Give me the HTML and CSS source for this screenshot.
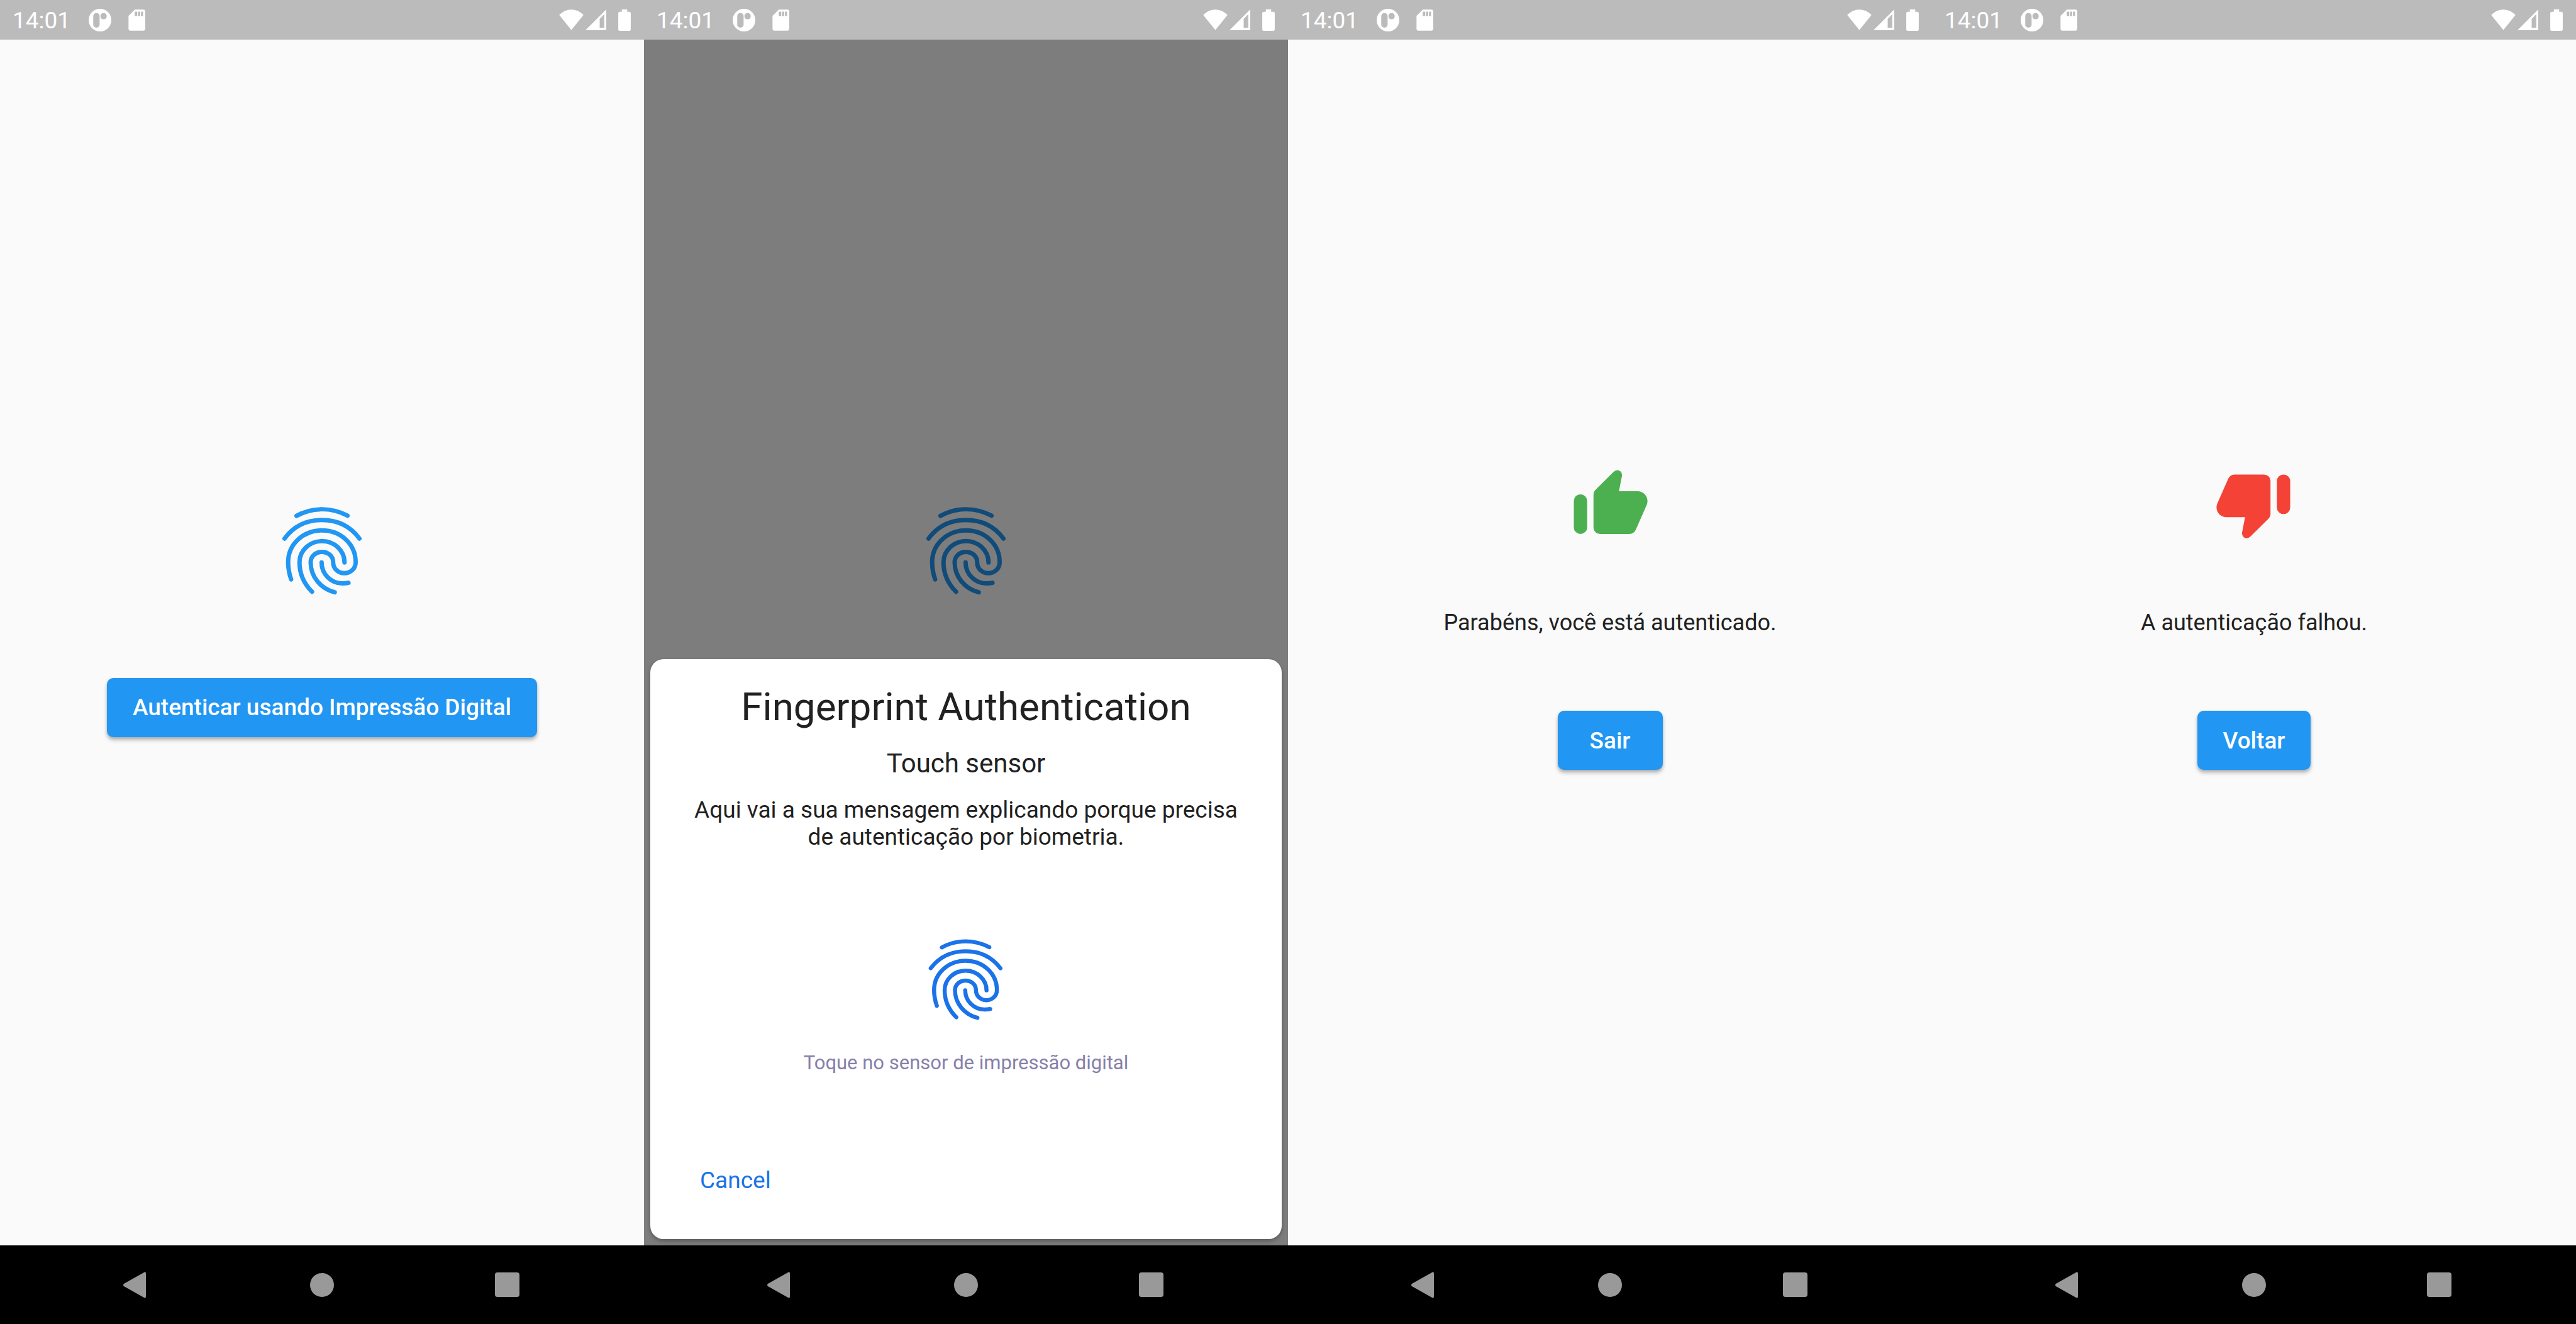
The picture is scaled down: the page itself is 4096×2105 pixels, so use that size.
FILE: index.html
```html
<!DOCTYPE html>
<html lang="pt-BR">
<head>
<meta charset="utf-8">
<title>Autenticação biométrica</title>
<link rel="stylesheet" href="styles.css">
</head>
<body>
<svg class="sprite" aria-hidden="true">
  <symbol id="app" viewBox="448 42 114 114"><circle cx="505" cy="99" r="57" fill="#fff"/><rect x="471" y="63" width="32" height="74" rx="16" fill="#bbb"/><circle cx="523" cy="79" r="16" fill="#bbb"/></symbol>
  <symbol id="sd" viewBox="646 47 84 106"><path fill="#fff" d="M678 48H720Q730 48 730 58V142Q730 152 720 152H657Q647 152 647 142V79Z"/><path fill="#bbb" d="M678 58h12v22h-12zM694 58h11v22h-11zM709 58h10v22h-10z"/></symbol>
  <symbol id="wifi" viewBox="114 44 123 105"><path fill="#fff" d="M114 72Q142 45 175.500 45T237 72L175.500 148Z"/></symbol>
  <symbol id="signal" viewBox="247 46 104 104"><path fill="#fff" fill-rule="evenodd" d="M247 150L351 46V150ZM318 93V138H341V70Z"/></symbol>
  <symbol id="battery" viewBox="411 45 63 108"><path fill="#fff" d="M429 45h27v12h11q7 0 7 7v82q0 7-7 7h-49q-7 0-7-7V64q0-7 7-7h11z"/></symbol>
  <symbol id="finger" viewBox="0 0 600 600"><g fill="none" stroke="currentColor" stroke-width="22" stroke-linecap="round"><path d="M172 133C252 89 348 89 428 132"/><path d="M112 247C160 182 228 154 300 154S440 182 488 247"/><path d="M145 452C135 423 130 402 130 366C130 275 206 206 300 206S469 275 469 366C469 397 444 421 412 421S356 397 356 366S330 314 299 314S243 337 243 366C243 440 295 500 364 517"/><path d="M413 367C413 307 362 260 300 260S187 307 187 366C187 425 209 473 250 514"/><path d="M298 367C298 425 345 472 402 472Q420 472 433 469"/></g></symbol>
  <symbol id="thumb" viewBox="0 -15 600 465"><rect x="118" y="178" width="67" height="199" rx="33" fill="currentColor"/><path fill="currentColor" d="M217 345V180Q217 165 228 154L318 65Q335 49 352 62Q362 71 360 86L345 162H438C474 162 498 196 485 230L430 355Q420 377 398 377H250A33 32 0 0 1 217 345Z"/></symbol>
  <symbol id="back" viewBox="0 0 41 42"><path fill="#999" d="M33 1Q36 -1 36 3V39Q36 43 33 41L1 23Q-1 21 1 19Z"/></symbol>
</svg>
<div class="screens">

  <section class="screen">
    <header class="status">
      <span class="time">14:01</span>
      <svg class="ic-app"><use href="#app"/></svg>
      <svg class="ic-sd"><use href="#sd"/></svg>
      <svg class="ic-wifi"><use href="#wifi"/></svg>
      <svg class="ic-signal"><use href="#signal"/></svg>
      <svg class="ic-battery"><use href="#battery"/></svg>
    </header>
    <main class="content">
      <svg class="finger"><use href="#finger"/></svg>
      <button class="btn" type="button">Autenticar usando Impressão Digital</button>
    </main>
    <nav class="navbar">
      <button class="nav-btn" type="button" aria-label="Voltar"><svg class="back"><use href="#back"/></svg></button>
      <button class="nav-btn home" type="button" aria-label="Início"></button>
      <button class="nav-btn recent" type="button" aria-label="Recentes"></button>
    </nav>
  </section>

  <section class="screen">
    <header class="status">
      <span class="time">14:01</span>
      <svg class="ic-app"><use href="#app"/></svg>
      <svg class="ic-sd"><use href="#sd"/></svg>
      <svg class="ic-wifi"><use href="#wifi"/></svg>
      <svg class="ic-signal"><use href="#signal"/></svg>
      <svg class="ic-battery"><use href="#battery"/></svg>
    </header>
    <main class="content">
      <svg class="finger behind"><use href="#finger"/></svg>
      <div class="scrim">
        <div class="dialog" role="dialog" aria-labelledby="dlg-title">
          <h1 class="dlg-title" id="dlg-title">Fingerprint Authentication</h1>
          <h2 class="dlg-sub">Touch sensor</h2>
          <p class="dlg-text">Aqui vai a sua mensagem explicando porque precisa de autenticação por biometria.</p>
          <svg class="dlg-finger" viewBox="0 0 600 570"><g transform="translate(18 -8) scale(.933 .923)"><use href="#finger" width="600" height="600"/></g></svg>
          <p class="dlg-hint">Toque no sensor de impressão digital</p>
          <button class="dlg-cancel" type="button">Cancel</button>
        </div>
      </div>
    </main>
    <nav class="navbar">
      <button class="nav-btn" type="button" aria-label="Voltar"><svg class="back"><use href="#back"/></svg></button>
      <button class="nav-btn home" type="button" aria-label="Início"></button>
      <button class="nav-btn recent" type="button" aria-label="Recentes"></button>
    </nav>
  </section>

  <section class="screen">
    <header class="status">
      <span class="time">14:01</span>
      <svg class="ic-app"><use href="#app"/></svg>
      <svg class="ic-sd"><use href="#sd"/></svg>
      <svg class="ic-wifi"><use href="#wifi"/></svg>
      <svg class="ic-signal"><use href="#signal"/></svg>
      <svg class="ic-battery"><use href="#battery"/></svg>
    </header>
    <main class="content">
      <svg class="thumb ok"><use href="#thumb"/></svg>
      <p class="message">Parabéns, você está autenticado.</p>
      <button class="btn" type="button">Sair</button>
    </main>
    <nav class="navbar">
      <button class="nav-btn" type="button" aria-label="Voltar"><svg class="back"><use href="#back"/></svg></button>
      <button class="nav-btn home" type="button" aria-label="Início"></button>
      <button class="nav-btn recent" type="button" aria-label="Recentes"></button>
    </nav>
  </section>

  <section class="screen">
    <header class="status">
      <span class="time">14:01</span>
      <svg class="ic-app"><use href="#app"/></svg>
      <svg class="ic-sd"><use href="#sd"/></svg>
      <svg class="ic-wifi"><use href="#wifi"/></svg>
      <svg class="ic-signal"><use href="#signal"/></svg>
      <svg class="ic-battery"><use href="#battery"/></svg>
    </header>
    <main class="content">
      <svg class="thumb fail" viewBox="0 -15 600 465"><g transform="rotate(180 300 227.500)"><use href="#thumb" y="-15" width="600" height="465"/></g></svg>
      <p class="message">A autenticação falhou.</p>
      <button class="btn" type="button">Voltar</button>
    </main>
    <nav class="navbar">
      <button class="nav-btn" type="button" aria-label="Voltar"><svg class="back"><use href="#back"/></svg></button>
      <button class="nav-btn home" type="button" aria-label="Início"></button>
      <button class="nav-btn recent" type="button" aria-label="Recentes"></button>
    </nav>
  </section>

</div>
</body>
</html>
```
FILE: styles.css
```css
* {
  box-sizing: border-box;
  margin: 0;
}

body {
  font-family: Roboto, sans-serif;
  font-size: 37px;
  line-height: 43px;
  color: #212121;
  background: #fafafa;
}

button {
  border: 0;
  padding: 0;
  background: none;
  font: inherit;
  cursor: pointer;
}

svg {
  display: block;
  flex: none;
}

.sprite {
  position: absolute;
  width: 0;
  height: 0;
}

.screens {
  display: grid;
  grid-template-columns: repeat(4, 1fr);
  min-height: 100vh;
}

.screen {
  display: flex;
  flex-direction: column;
}

/* Status bar */
.status {
  display: flex;
  align-items: center;
  height: 63px;
  padding: 0 21px 0 20px;
  background: #bbb;
  color: #fff;
}

.time {
  padding-top: 2px;
}

.ic-app {
  width: 36px;
  height: 36px;
  margin-left: 29px;
}

.ic-sd {
  width: 27px;
  height: 34px;
  margin-left: 27px;
}

.ic-wifi {
  width: 39px;
  height: 33px;
  margin-left: auto;
}

.ic-signal {
  width: 33px;
  height: 33px;
  margin-left: 3px;
}

.ic-battery {
  width: 20px;
  height: 34px;
  margin-left: 19px;
}

/* App area */
.content {
  position: relative;
  flex: 1;
  display: flex;
  flex-direction: column;
  align-items: center;
  justify-content: center;
  padding-bottom: 94px;
}

.finger {
  width: 190px;
  height: 190px;
  margin-bottom: 110px;
  color: #2196f3;
}

.finger.behind {
  margin-bottom: 204px;
}

.btn {
  min-width: 167px;
  height: 94px;
  padding: 0 41px;
  border-radius: 10px;
  background: #2196f3;
  color: #fff;
  font-weight: 500;
  box-shadow: 0 5px 6px rgba(0, 0, 0, .22), 0 2px 4px rgba(0, 0, 0, .14);
}

.thumb {
  width: 190px;
  height: 147px;
}

.ok {
  color: #4caf50;
}

.fail {
  color: #f44336;
}

.message {
  margin: 97px 0 118px;
  font-size: 36px;
}

/* Biometric prompt */
.scrim {
  position: absolute;
  inset: 0;
  display: flex;
  align-items: flex-end;
  padding: 10px;
  background: rgba(0, 0, 0, .5);
}

.dialog {
  flex: 1;
  display: flex;
  flex-direction: column;
  align-items: center;
  padding: 39px 70px 72px;
  border-radius: 21px;
  background: #fff;
  text-align: center;
  box-shadow: 0 3px 6px rgba(0, 0, 0, .3);
}

.dlg-title {
  font-size: 62px;
  line-height: 74px;
  font-weight: 400;
}

.dlg-sub {
  margin-top: 28px;
  font-size: 42px;
  line-height: 50px;
  font-weight: 400;
}

.dlg-text {
  margin-top: 27px;
}

.dlg-finger {
  width: 190px;
  height: 180px;
  margin-top: 118px;
  color: #1a73e8;
}

.dlg-hint {
  margin-top: 21px;
  font-size: 31px;
  line-height: 37px;
  color: #8680aa;
}

.dlg-cancel {
  align-self: flex-start;
  margin: 147px 0 0 9px;
  color: #1a73e8;
}

/* Navigation bar */
.navbar {
  display: flex;
  align-items: center;
  justify-content: space-between;
  height: 125px;
  padding: 0 198px 0 196px;
  background: #000;
}

.back {
  width: 41px;
  height: 42px;
}

.home {
  width: 38px;
  height: 38px;
  border-radius: 50%;
  background: #999;
}

.recent {
  width: 39px;
  height: 39px;
  border-radius: 4px;
  background: #999;
}
```
